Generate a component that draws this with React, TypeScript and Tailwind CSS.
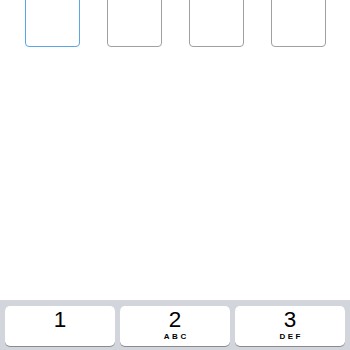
import React from 'react';

const keys = [
    { digit: '1', letters: '' },
    { digit: '2', letters: 'ABC' },
    { digit: '3', letters: 'DEF' },
];

const App: React.FC = () => {
    return (
        <div className="w-[350px] h-[350px] bg-white flex flex-col overflow-hidden" style={{ fontFamily: '"Liberation Sans", Arial, sans-serif' }}>
            <div className="flex gap-[27px] pl-[25px] -mt-[14px]">
                {[0, 1, 2, 3].map(i => (
                    <div
                        key={i}
                        className={`w-[55px] h-[61px] rounded-[4px] border-[1.5px] ${i === 0 ? 'border-[#5aa6e6]' : 'border-[#a0a0a0]'}`}
                    />
                ))}
            </div>
            <div className="flex-grow" />
            <div className="h-[50px] bg-[#d2d5db] pt-[6px] px-[5px]">
                <div className="grid grid-cols-3 gap-[5px]">
                    {keys.map(k => (
                        <div key={k.digit} className="h-[40px] bg-white rounded-[5px] shadow-[0_1px_0_#8a8b8f] flex flex-col items-center pt-[2px]">
                            <span className="text-[22.5px] leading-[24px] text-black">{k.digit}</span>
                            {k.letters && (
                                <span className="text-[8px] font-bold tracking-[2.5px] leading-[10px] text-black pl-[2.5px]">{k.letters}</span>
                            )}
                        </div>
                    ))}
                </div>
            </div>
        </div>
    );
};

export default App;
